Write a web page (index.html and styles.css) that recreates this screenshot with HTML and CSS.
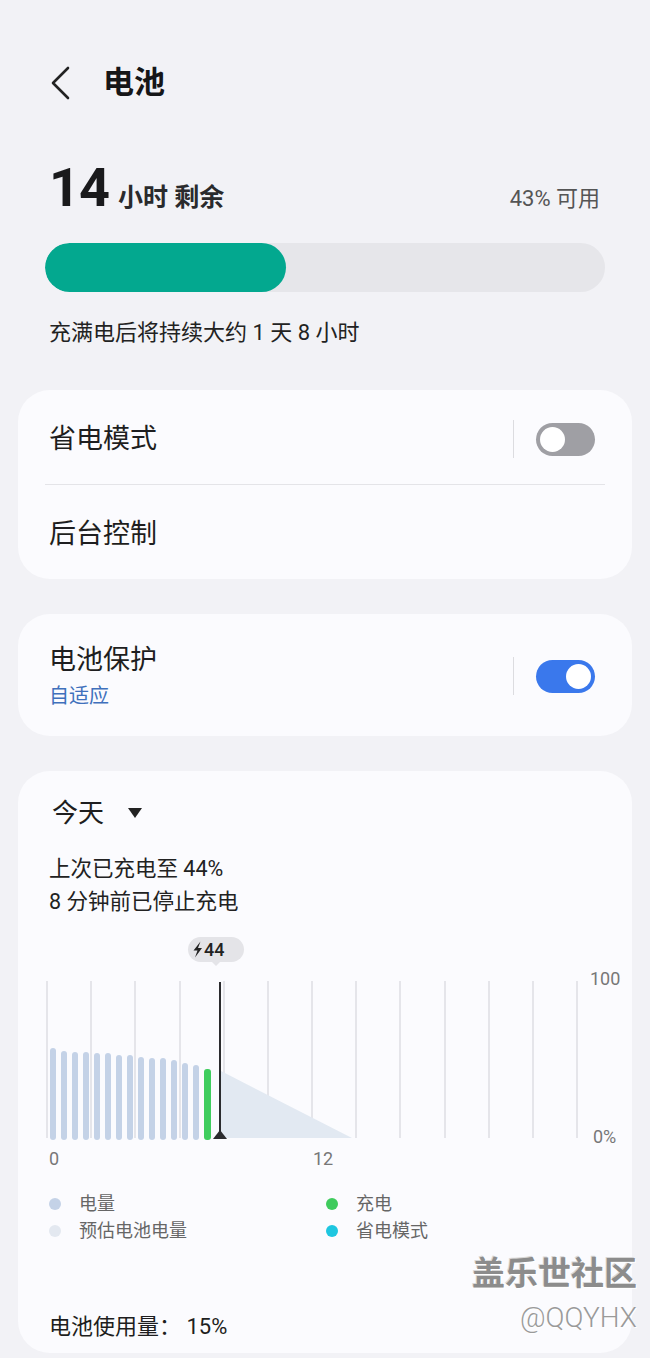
FILE: index.html
```html
<!DOCTYPE html>
<html>
<head>
    <meta charset="UTF-8">
    <title>电池</title>
    <link rel="stylesheet" href="styles.css">
</head>
<body>

<div class="page">
    <div class="header">
        <svg class="back" width="20" height="34" viewBox="0 0 20 34">
            <polyline points="17,2 2,17 17,32" fill="none" stroke="#222" stroke-width="2.6" stroke-linecap="round" stroke-linejoin="round"/>
        </svg>
        <h1 class="title">电池</h1>
    </div>

    <div class="summary">
        <div class="remain"><span class="big">14</span><span class="unit">小时 剩余</span></div>
        <div class="avail">43% 可用</div>
    </div>

    <div class="bar">
        <div class="bar-fill" style="width: 43%"></div>
    </div>

    <p class="full">充满电后将持续大约 1 天 8 小时</p>

    <div class="card card-first">
        <div class="row">
            <span class="row-title">省电模式</span>
            <div class="switch-wrap">
                <span class="sep"></span>
                <span class="switch"><span class="knob"></span></span>
            </div>
        </div>
        <div class="line"></div>
        <div class="row">
            <span class="row-title">后台控制</span>
        </div>
    </div>

    <div class="card">
        <div class="row row-sub">
            <div>
                <div class="row-title">电池保护</div>
                <div class="row-desc">自适应</div>
            </div>
            <div class="switch-wrap">
                <span class="sep"></span>
                <span class="switch on"><span class="knob"></span></span>
            </div>
        </div>
    </div>

    <div class="card card-usage">
        <div class="day">今天<span class="caret"></span></div>
        <div class="info">
            <p>上次已充电至 44%</p>
            <p>8 分钟前已停止充电</p>
        </div>

        <svg class="chart" width="614" height="242" viewBox="0 0 614 242">
            <g stroke="#dedee3" stroke-width="1.5">
                <line x1="29" y1="51" x2="29" y2="208"/>
                <line x1="73" y1="51" x2="73" y2="208"/>
                <line x1="117" y1="51" x2="117" y2="208"/>
                <line x1="162" y1="51" x2="162" y2="208"/>
                <line x1="206" y1="51" x2="206" y2="208"/>
                <line x1="250" y1="51" x2="250" y2="208"/>
                <line x1="294" y1="51" x2="294" y2="208"/>
                <line x1="338" y1="51" x2="338" y2="208"/>
                <line x1="382" y1="51" x2="382" y2="208"/>
                <line x1="427" y1="51" x2="427" y2="208"/>
                <line x1="471" y1="51" x2="471" y2="208"/>
                <line x1="515" y1="51" x2="515" y2="208"/>
                <line x1="559" y1="51" x2="559" y2="208"/>
            </g>
            <polygon points="203,141 334,208 203,208" fill="#e2e9f2"/>
            <g fill="#c4d2e7">
                <rect x="32" y="118" width="6" height="92" rx="3"/>
                <rect x="43" y="121" width="6" height="89" rx="3"/>
                <rect x="54" y="122" width="6" height="88" rx="3"/>
                <rect x="65" y="122" width="6" height="88" rx="3"/>
                <rect x="76" y="123" width="6" height="87" rx="3"/>
                <rect x="87" y="123" width="6" height="87" rx="3"/>
                <rect x="98" y="125" width="6" height="85" rx="3"/>
                <rect x="109" y="125" width="6" height="85" rx="3"/>
                <rect x="120" y="127" width="6" height="83" rx="3"/>
                <rect x="131" y="128" width="6" height="82" rx="3"/>
                <rect x="142" y="128" width="6" height="82" rx="3"/>
                <rect x="153" y="130" width="6" height="80" rx="3"/>
                <rect x="164" y="133" width="6" height="77" rx="3"/>
                <rect x="175" y="135" width="6" height="75" rx="3"/>
            </g>
            <rect x="186" y="139" width="7" height="71" rx="3" fill="#3fcd5e"/>
            <line x1="202" y1="52" x2="202" y2="206" stroke="#2b2b2e" stroke-width="2"/>
            <polygon points="195,209 202,200 209,209" fill="#2b2b2e"/>
            <rect x="170" y="7" width="56" height="25" rx="12.5" fill="#e4e4e8"/>
            <polygon points="193,31 203,31 198,36" fill="#e4e4e8"/>
            <path d="M182.5 11.5 L175.5 20.5 L179.5 20.5 L177 27.5 L184 18 L180 18 Z" fill="#222"/>
            <text x="186" y="26" class="tip">44</text>
            <text x="572" y="55" class="axis">100</text>
            <text x="575" y="213" class="axis">0%</text>
            <text x="31" y="235" class="axis">0</text>
            <text x="295" y="235" class="axis">12</text>
        </svg>

        <div class="legend">
            <span class="key"><i class="dot dot-level"></i>电量</span>
            <span class="key"><i class="dot dot-charge"></i>充电</span>
            <span class="key"><i class="dot dot-est"></i>预估电池电量</span>
            <span class="key"><i class="dot dot-save"></i>省电模式</span>
        </div>

        <p class="usage">电池使用量： 15%</p>

        <div class="watermark">
            <div class="wm-name">盖乐世社区</div>
            <div class="wm-id">@QQYHX</div>
        </div>
    </div>
</div>

</body>
</html>
```

FILE: styles.css
```css
* {
    margin: 0;
    padding: 0;
    box-sizing: border-box;
}

body {
    background: #f2f2f6;
    font-family: Roboto, "Noto Sans CJK SC", sans-serif;
    color: #1e1e20;
    width: 650px;
    height: 1358px;
    overflow: hidden;
}

.page {
    padding: 0 18px;
}

/* header */
.header {
    display: flex;
    align-items: center;
    height: 56px;
    margin-top: 55px;
}

.back {
    margin-left: 33px;
}

.title {
    margin-left: 32px;
    font-size: 31px;
    font-weight: 700;
    line-height: 40px;
    color: #161618;
}

/* remaining time */
.summary {
    display: flex;
    align-items: baseline;
    justify-content: space-between;
    margin-top: 47px;
    padding: 0 32px 0 31px;
    line-height: 60px;
}

.big {
    font-size: 54px;
    font-weight: 700;
    letter-spacing: -1px;
    color: #1a1a1c;
}

.unit {
    margin-left: 9px;
    font-size: 25px;
    font-weight: 700;
    color: #2a2a2c;
}

.avail {
    font-size: 22px;
    color: #555;
}

.bar {
    height: 49px;
    margin: 12px 27px 0;
    border-radius: 25px;
    background: #e6e6ea;
    overflow: hidden;
}

.bar-fill {
    height: 100%;
    border-radius: 25px;
    background: #03a88f;
}

.full {
    margin-top: 26px;
    padding-left: 31px;
    font-size: 22px;
    line-height: 30px;
    color: #222;
}

/* cards */
.card {
    margin-top: 35px;
    padding: 0 27px;
    border-radius: 32px;
    background: #fbfbfe;
}

.card-first {
    margin-top: 42px;
}

.row {
    display: flex;
    align-items: center;
    justify-content: space-between;
    height: 94px;
    padding: 4px 10px 0 4px;
}

.row-sub {
    height: 122px;
    padding-top: 2px;
}

.row-title {
    font-size: 27px;
    line-height: 36px;
    color: #1e1e20;
}

.row-desc {
    margin-top: 4px;
    font-size: 20px;
    line-height: 28px;
    color: #3f70bc;
}

.line {
    height: 1px;
    background: #e4e4e8;
}

.switch-wrap {
    display: flex;
    align-items: center;
}

.sep {
    width: 1px;
    height: 38px;
    background: #dcdce0;
    margin-right: 22px;
}

.switch {
    display: flex;
    width: 59px;
    height: 33px;
    padding: 4px;
    border-radius: 17px;
    background: #9f9fa4;
}

.switch .knob {
    width: 25px;
    height: 25px;
    border-radius: 50%;
    background: #fff;
}

.switch.on {
    justify-content: flex-end;
    background: #3a78ec;
}

/* usage card */
.card-usage {
    position: relative;
    padding: 24px 0 10px;
}

.day {
    display: flex;
    align-items: center;
    padding-left: 34px;
    font-size: 26px;
    line-height: 36px;
}

.caret {
    width: 0;
    height: 0;
    margin-left: 24px;
    border-left: 7px solid transparent;
    border-right: 7px solid transparent;
    border-top: 10px solid #222;
}

.info {
    margin-top: 21px;
    padding-left: 31px;
    font-size: 21.5px;
    line-height: 33px;
    color: #222;
}

.chart {
    display: block;
    margin-top: 12px;
}

.chart .axis {
    font-family: Roboto, sans-serif;
    font-size: 18px;
    fill: #777;
}

.chart .tip {
    font-family: Roboto, sans-serif;
    font-size: 18px;
    font-weight: 500;
    fill: #222;
}

.legend {
    display: grid;
    grid-template-columns: 277px 1fr;
    margin-top: 18px;
    padding-left: 31px;
    font-size: 18px;
    line-height: 27px;
    color: #666;
}

.key {
    display: flex;
    align-items: center;
}

.dot {
    width: 12px;
    height: 12px;
    margin-right: 18px;
    border-radius: 50%;
}

.dot-level { background: #c4d2e7; }
.dot-est { background: #e3e8f0; }
.dot-charge { background: #3fcb5d; }
.dot-save { background: #1ec6e0; }

.usage {
    margin-top: 67px;
    padding-left: 31px;
    font-size: 22px;
    line-height: 32px;
    color: #1e1e20;
}

.watermark {
    position: absolute;
    right: -5px;
    top: 482px;
    text-align: right;
}

.wm-name {
    font-size: 33px;
    font-weight: 700;
    line-height: 42px;
    color: #8c8c8c;
    text-shadow: 1px 1px 0 #fff, -1px -1px 0 #d8d8d8;
}

.wm-id {
    margin-top: 6px;
    font-size: 28px;
    font-weight: 300;
    line-height: 34px;
    color: #9a9a9a;
    text-shadow: 1px 1px 0 #fff;
}
```
